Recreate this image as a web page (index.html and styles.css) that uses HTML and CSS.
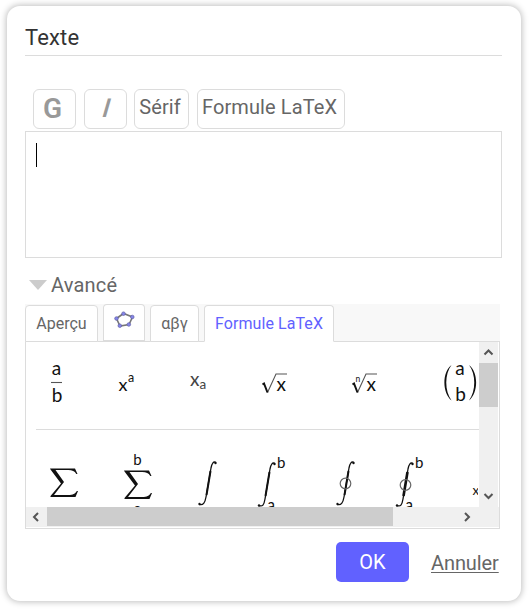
FILE: index.html
```html
<!DOCTYPE html>
<html lang="fr">
<head>
<meta charset="utf-8">
<title>Texte</title>
<link rel="stylesheet" href="styles.css">
</head>
<body>
<main class="dialog">
  <h1 class="title">Texte</h1>
  <div class="toolbar">
    <button class="tool bold">G</button>
    <button class="tool italic"><span>I</span></button>
    <button class="tool serif">Sérif</button>
    <button class="tool latex">Formule LaTeX</button>
  </div>
  <div class="editor"><span class="caret"></span></div>
  <div class="advanced"><span class="triangle"></span><span>Avancé</span></div>
  <nav class="tabs">
    <div class="tab preview">Aperçu</div>
    <div class="tab objects">
      <svg width="22" height="20" viewBox="0 0 22 20"><path d="M2.500 7.500 9.500 2.500 18.500 6 15 13.500 6 15Z" fill="none" stroke="#777" stroke-width="1.600"/><g fill="#8585e8" stroke="#6060a8" stroke-width=".7"><circle cx="2.500" cy="7.500" r="1.800"/><circle cx="9.500" cy="2.700" r="1.800"/><circle cx="18.300" cy="6" r="1.800"/><circle cx="14.800" cy="13.500" r="1.800"/><circle cx="5.800" cy="14.700" r="1.800"/></g></svg>
    </div>
    <div class="tab greek">αβγ</div>
    <div class="tab formula active">Formule LaTeX</div>
  </nav>
  <section class="panel">
    <div class="view">
      <div class="row first">
        <svg width="50" height="87" viewBox="36 342 50 87"><text x="56.500" y="374.500" font-size="19" text-anchor="middle">a</text><path class="thin" d="M51 382.500h11"/><text x="57" y="401.500" font-size="19" text-anchor="middle">b</text></svg>
        <svg width="76" height="87" viewBox="86 342 76 87"><text x="118.500" y="390.500" font-size="18">x</text><text x="128" y="382" font-size="12.500">a</text></svg>
        <svg width="74" height="87" viewBox="162 342 74 87"><g class="soft"><text x="190" y="385.500" font-size="19">x</text><text x="199.500" y="388.500" font-size="13.500">a</text></g></svg>
        <svg width="84" height="87" viewBox="236 342 84 87"><path class="thin" d="M267.500 392.500 276 374h11"/><path class="thick" d="m262.500 384.500 1.500-1 3.500 9"/><text x="276.500" y="390.500" font-size="19">x</text></svg>
        <svg width="92" height="87" viewBox="320 342 92 87"><text x="355.500" y="382" font-size="8.500">n</text><path class="thin" d="M357.500 392.500 366 374h11"/><path class="thick" d="m352.500 384.500 1.500-1 3.500 9"/><text x="366.500" y="390.500" font-size="19">x</text></svg>
        <svg width="66" height="87" viewBox="412 342 66 87"><path class="paren" d="M451.500 365C442 372 442 393 451.500 400.500 444.500 391 444.500 374 451.500 365ZM469 365C478.500 372 478.500 393 469 400.500 476 391 476 374 469 365Z"/><text x="460" y="374.500" font-size="19" text-anchor="middle">a</text><text x="460.500" y="401" font-size="19" text-anchor="middle">b</text></svg>
      </div>
      <div class="row">
        <svg width="64" height="77" viewBox="36 430 64 77"><path class="glyph" d="M50 468.500H75l2.500 5.500h-1.200c-1.700-3-4-4-8-4H55.500L64 482 54 495h14.300c4.700 0 7-1.200 8.500-4h1.200L75.500 497H50.500v-1L61 483.500 50.500 469.500Z"/></svg>
        <svg width="76" height="77" viewBox="100 430 76 77"><text x="137.500" y="465" font-size="15" text-anchor="middle">b</text><path class="glyph" transform="translate(74 2)" d="M50 468.500H75l2.500 5.500h-1.200c-1.700-3-4-4-8-4H55.500L64 482 54 495h14.300c4.700 0 7-1.200 8.500-4h1.200L75.500 497H50.500v-1L61 483.500 50.500 469.500Z"/><text x="137.500" y="513.500" font-size="15" text-anchor="middle">a</text></svg>
        <svg width="64" height="77" viewBox="176 430 64 77"><path class="integral" d="M216 462.500c-2.500-1.500-4 .5-5 5.500l-5 29c-1 6-3 8.500-6.500 7.500"/><path class="stem" d="m210.500 471-4 24"/><circle cx="215.500" cy="463" r="1.200"/><circle cx="199.500" cy="504" r="1.200"/></svg>
        <svg width="70" height="77" viewBox="240 430 70 77"><path class="integral" d="M275 463.500c-2.500-1.500-4 .5-5 5.500l-5 30c-1 6-2.500 8-6 6.500"/><path class="stem" d="m269.500 472-4 24"/><circle cx="274.500" cy="464" r="1.200"/><circle cx="259" cy="505.500" r="1.200"/><text x="277" y="468" font-size="15">b</text><text x="267.500" y="509.500" font-size="15">a</text></svg>
        <svg width="70" height="77" viewBox="310 430 70 77"><path class="integral" d="M354 462.500c-2.500-1.500-4 .5-5 5.500l-5 29c-1 6-3 8.500-6.500 7.500"/><path class="stem" d="m348.500 471-4 24"/><circle cx="353.500" cy="463" r="1.200"/><circle cx="337.500" cy="504" r="1.200"/><circle class="ring" cx="345.500" cy="483.500" r="5.300"/></svg>
        <svg width="70" height="77" viewBox="380 430 70 77"><path class="integral" d="M413 463.500c-2.500-1.500-4 .5-5 5.500l-5 30c-1 6-2.500 8-6 6.500"/><path class="stem heavy" d="m407.500 472-4 24"/><circle cx="412.500" cy="464" r="1.200"/><circle cx="397" cy="505.500" r="1.200"/><circle class="ring" cx="405.500" cy="485" r="5.300"/><text x="415" y="468" font-size="15">b</text><text x="405.500" y="509.500" font-size="15">a</text></svg>
        <svg width="28" height="77" viewBox="450 430 28 77"><text x="472.500" y="495" font-size="13.500">x</text></svg>
      </div>
    </div>
    <div class="vscroll">
      <svg width="19" height="21" viewBox="0 0 19 21"><path d="m5.500 12.500 4-4 4 4"/></svg>
      <div class="vthumb"></div>
      <svg width="19" height="21" viewBox="0 0 19 21"><path d="m5.500 8 4 4 4-4"/></svg>
    </div>
    <div class="hscroll">
      <svg width="21" height="20" viewBox="0 0 21 20"><path d="m12 6-4 4 4 4"/></svg>
      <div class="hthumb"></div>
      <svg width="21" height="20" viewBox="0 0 21 20"><path d="m9 6 4 4-4 4"/></svg>
    </div>
  </section>
  <footer class="actions"><button class="ok">OK</button><a class="cancel">Annuler</a></footer>
</main>
</body>
</html>
```
FILE: styles.css
```css
* { box-sizing: border-box; }
body { margin: 0; padding: 6px 9px 8px 7px; background: #fff; font-family: Roboto, sans-serif; color: #666; }
svg { display: block; flex: none; }
button { font-family: inherit; color: inherit; background: #fff; padding: 0; }
.dialog { height: 595px; padding: 0 19px 0 18px; background: #fff; border-radius: 13px; box-shadow: 0 0 6px 1px rgba(0, 0, 0, .25); overflow: hidden; }
.title { margin: 0; height: 50px; padding-top: 18px; border-bottom: 1px solid #dcdcdc; font-size: 22px; line-height: 27px; font-weight: 400; letter-spacing: .15px; color: #333; }
.toolbar { display: flex; height: 40px; margin: 33px 0 0 8px; }
.tool { height: 40px; border: 1px solid #dcdcdc; border-radius: 6px; font-size: 20px; line-height: 34px; padding-bottom: 4px; white-space: nowrap; }
.bold { width: 43px; margin-right: 8px; padding: 0 4px 0 0; font-size: 28px; font-weight: 600; line-height: 38px; color: #999; }
.italic { width: 43px; margin-right: 7px; padding: 0 0 1px 2px; font-size: 26px; font-weight: 500; line-height: 37px; color: #999; }
.italic span { display: inline-block; transform: skewX(-16deg); }
.serif { width: 55px; margin-right: 8px; padding-right: 3px; letter-spacing: .1px; }
.latex { width: 148px; padding-right: 3px; letter-spacing: .1px; }
.editor { height: 127px; margin-top: 2px; border: 1px solid #dcdcdc; padding: 11px 10px; }
.caret { display: block; width: 1px; height: 24px; background: #000; }
.advanced { display: flex; height: 46px; align-items: center; padding: 8px 0 0 4px; font-size: 20px; letter-spacing: .2px; }
.triangle { width: 18px; height: 10px; margin-right: 4px; background: #ccc; clip-path: polygon(0 0, 100% 0, 50% 100%); }
.tabs { display: flex; align-items: flex-end; gap: 5px; width: 475px; height: 38px; background: #f8f8f8; }
.tab { height: 37px; border: 1px solid #dcdcdc; border-radius: 4px 4px 0 0; background: #fff; font-size: 16px; line-height: 36px; text-align: center; }
.preview { width: 73px; }
.objects { width: 42px; height: 38px; padding: 6px 0 0 10px; border-bottom-width: 2px; }
.greek { width: 49px; }
.formula { width: 130px; letter-spacing: .08px; }
.active { color: #6161ff; border-bottom-color: #fff; position: relative; z-index: 1; }
.panel { display: grid; grid-template: 165px 20px / 453px 20px; width: 475px; height: 188px; margin-top: -1px; border: 1px solid #dcdcdc; background: #fff; }
.view { padding-left: 10px; overflow: hidden; }
.row { display: flex; font-family: Lato, sans-serif; }
.first { height: 88px; border-bottom: 1px solid #dcdcdc; }
.row svg { fill: #111; }
.row .thin { fill: none; stroke: #555; stroke-width: 1.1; }
.row .thick { fill: none; stroke: #111; stroke-width: 2; }
.row .soft { fill: #444; }
.row .integral { fill: none; stroke: #111; stroke-width: 1.3; }
.row .stem { fill: none; stroke: #111; stroke-width: 2; }
.row .heavy { stroke-width: 2.6; }
.row .ring { fill: none; stroke: #666; stroke-width: 1.2; }
.vscroll { width: 19px; background: #f0f0f0; }
.vscroll path, .hscroll path { fill: none; stroke: #555; stroke-width: 2; }
.vthumb { height: 44px; margin-bottom: 79px; background: #cdcdcd; }
.hscroll { grid-column: 1 / 3; display: flex; height: 20px; background: #f0f0f0; }
.hthumb { width: 346px; height: 19px; margin-right: 63px; background: #cdcdcd; }
.actions { display: flex; margin-top: 13px; padding-left: 311px; font-size: 20px; }
.ok { width: 73px; height: 40px; margin-right: 22px; border: 0; border-radius: 5px; background: #6161ff; color: #fff; font-size: 20px; }
.cancel { line-height: 42px; letter-spacing: -.1px; text-decoration: underline; text-underline-offset: 2px; text-decoration-thickness: 1px; }
```
